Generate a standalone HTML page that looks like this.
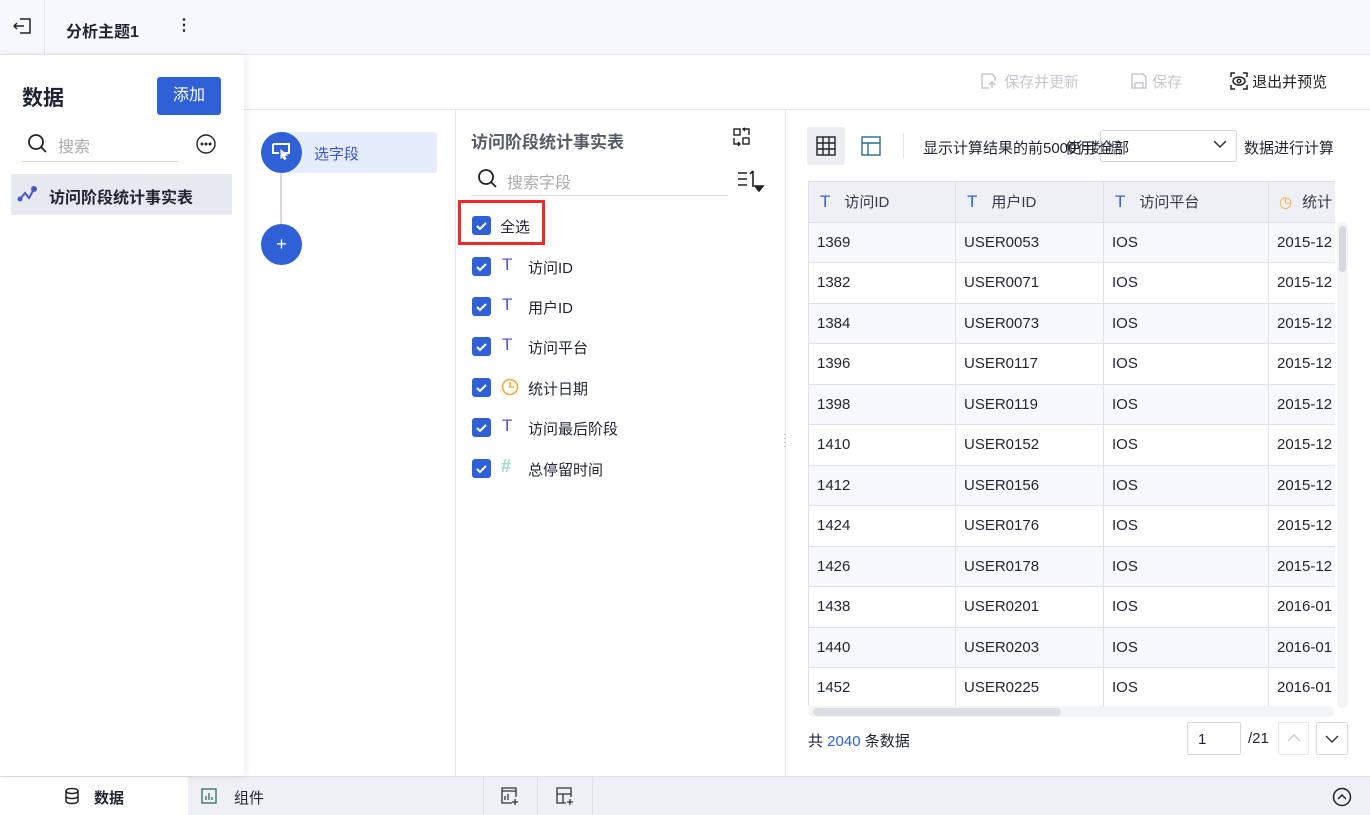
<!DOCTYPE html>
<html><head><meta charset="utf-8"><style>
*{box-sizing:border-box;margin:0;padding:0}
body{width:1370px;height:815px;overflow:hidden;background:#fff;font-family:"Liberation Sans","Noto Sans CJK SC",sans-serif;color:#1f2433;font-size:14px;position:relative}
.abs{position:absolute;white-space:nowrap}
.top{left:0;top:0;width:1370px;height:55px;background:#f7f8fc;border-bottom:1px solid #e3e6ec}
.left{left:0;top:55px;width:244px;height:721px;background:#fff;box-shadow:2px 0 8px rgba(0,0,0,.08);z-index:2}
.cb{width:19px;height:19px;background:#2f60d6;border-radius:3px}
.cb svg{display:block}
table{border-collapse:collapse;position:absolute;left:0;top:0;font-size:15px;table-layout:fixed;width:580px}
td,th{height:40.5px;border:1px solid #dde0e7;padding-left:8px;text-align:left;font-weight:normal;white-space:nowrap;overflow:hidden}
th{background:#eef0f5;color:#333a4a}
tr:nth-child(odd) td{background:#fff}
tr:nth-child(even) td{background:#f7f8fb}
.T{color:#2f60d6;font-size:17px;margin-right:14px;margin-left:3px}
</style></head><body>
<div class="abs top">
 <div class="abs" style="left:0;top:0;width:45px;height:54px;border-right:1px solid #e3e6ec"></div>
 <svg class="abs" style="left:13px;top:16px" width="20" height="20" viewBox="0 0 20 20" fill="none" stroke="#222" stroke-width="1.5"><path d="M7 3h10v14H7M1 10h10M4 7l-3 3 3 3"/></svg>
 <div class="abs" style="left:66px;top:18px;font-size:16px;font-weight:bold">分析主题1</div>
 <div class="abs" style="left:176px;top:15px;font-size:16px;font-weight:bold">⋮</div>
</div>
<div class="abs left">
 <div class="abs" style="left:22px;top:27px;font-size:21px;font-weight:bold">数据</div>
 <div class="abs" style="left:157px;top:22px;width:64px;height:38px;background:#2f60d6;border-radius:3px;color:#fff;font-size:16px;line-height:38px;text-align:center">添加</div>
 <svg class="abs" style="left:27px;top:78px" width="22" height="22" viewBox="0 0 22 22" fill="none" stroke="#222" stroke-width="1.8"><circle cx="9" cy="9" r="7"/><path d="M14 14l5 5"/></svg>
 <div class="abs" style="left:58px;top:78px;color:#aaa;font-size:16px">搜索</div>
 <div class="abs" style="left:22px;top:106px;width:156px;height:1px;background:#d8dbe2"></div>
 <svg class="abs" style="left:195px;top:78px" width="22" height="22" viewBox="0 0 22 22" fill="none" stroke="#222" stroke-width="1.4"><circle cx="11" cy="11" r="9"/><circle cx="7" cy="11" r=".8" fill="#222"/><circle cx="11" cy="11" r=".8" fill="#222"/><circle cx="15" cy="11" r=".8" fill="#222"/></svg>
 <div class="abs" style="left:11px;top:119px;width:221px;height:41px;background:#e6e9f0"></div>
 <svg class="abs" style="left:17px;top:130px" width="20" height="18" viewBox="0 0 20 18" fill="none" stroke="#4b55c9" stroke-width="2"><path d="M3 14l5-6 4 5 5-9"/><circle cx="3" cy="14" r="1.5" fill="#4b55c9"/><circle cx="17" cy="4" r="2" fill="#4b55c9"/></svg>
 <div class="abs" style="left:49px;top:129px;font-size:16px;font-weight:bold">访问阶段统计事实表</div>
</div>
<div class="abs" style="left:244px;top:109px;width:1126px;height:1px;background:#e3e6ec"></div>
<div class="abs" style="left:980px;top:71px;color:#c3c7cf;font-size:15px">
 <svg style="vertical-align:-3px" width="20" height="18" viewBox="0 0 20 18" fill="none" stroke="#c3c7cf" stroke-width="1.5"><path d="M9 16H2V2h10l3 3v4M12 16v-6m-3 3l3-3 3 3"/></svg> 保存并更新</div>
<div class="abs" style="left:1130px;top:71px;color:#c3c7cf;font-size:15px">
 <svg style="vertical-align:-3px" width="18" height="18" viewBox="0 0 18 18" fill="none" stroke="#c3c7cf" stroke-width="1.5"><path d="M2 2h11l3 3v11H2zM5 16v-5h8v5"/></svg> 保存</div>
<div class="abs" style="left:1230px;top:71px;font-size:15px;color:#222">
 <svg style="vertical-align:-3px" width="18" height="18" viewBox="0 0 18 18" fill="none" stroke="#222" stroke-width="1.5"><path d="M1 5V1h4M13 1h4v4M17 13v4h-4M5 17H1v-4"/><ellipse cx="9" cy="9" rx="6" ry="4"/><circle cx="9" cy="9" r="1.8"/></svg> 退出并预览</div>
<div class="abs" style="left:455px;top:110px;width:1px;height:666px;background:#e3e6ec"></div>
<div class="abs" style="left:785px;top:110px;width:1px;height:666px;background:#e3e6ec"></div>
<div class="abs" style="left:280px;top:172px;width:2px;height:56px;background:#d5d8de"></div>
<div class="abs" style="left:280px;top:132px;width:157px;height:41px;background:#e5edfc;border-radius:3px"></div>
<div class="abs" style="left:261px;top:132px;width:41px;height:41px;background:#2f60d6;border-radius:50%"></div>
<svg class="abs" style="left:271px;top:142px" width="22" height="20" viewBox="0 0 22 20" fill="none" stroke="#fff" stroke-width="2"><path d="M2 2h16v9h-6M8 11H2V2"/><path d="M10 8l6 5-3 .5 2 3-1.5 1-2-3L10 16z" fill="#fff" stroke-width="1"/></svg>
<div class="abs" style="left:314px;top:143px;color:#3a55c9;font-size:15px">选字段</div>
<div class="abs" style="left:261px;top:224px;width:41px;height:41px;background:#2f60d6;border-radius:50%;color:#fff;text-align:center;line-height:40px;font-size:18px">+</div>
<div class="abs" style="left:240px;top:405px;color:#999;font-size:10px;line-height:4px">·<br>·<br>·<br>·</div>
<div class="abs" style="left:783px;top:433px;color:#999;font-size:10px;line-height:4px">·<br>·<br>·<br>·</div>
<div class="abs" style="left:471px;top:128px;font-size:17px;font-weight:bold;color:#555c68">访问阶段统计事实表</div>
<svg class="abs" style="left:732px;top:127px" width="20" height="20" viewBox="0 0 20 20" fill="none" stroke="#222" stroke-width="1.4"><rect x="2" y="2" width="6" height="6"/><rect x="11" y="11" width="6" height="6"/><path d="M2 11v6h6M11 2h6v6M13 1l-2 1 2 2M6 19l2-2-2-2"/></svg>
<svg class="abs" style="left:477px;top:168px" width="22" height="22" viewBox="0 0 22 22" fill="none" stroke="#222" stroke-width="1.8"><circle cx="9" cy="9" r="7"/><path d="M14 14l5 5"/></svg>
<div class="abs" style="left:507px;top:169px;color:#aaa;font-size:16px">搜索字段</div>
<div class="abs" style="left:471px;top:195px;width:257px;height:1px;background:#d8dbe2"></div>
<svg class="abs" style="left:737px;top:170px" width="28" height="24" viewBox="0 0 28 24" fill="none" stroke="#222" stroke-width="1.6"><path d="M1 3h9M1 9h9M1 15h9M16 1v16M13 4l3-3"/><path d="M18 16h8l-4 5z" fill="#222"/></svg>
<div class="abs" style="left:458px;top:200px;width:87px;height:45px;border:3px solid #f02a2a"></div>
<div class="abs cb" style="left:472px;top:216px"><svg width="19" height="19"><path d="M5 10l3 3 6-6" stroke="#fff" stroke-width="2" fill="none"/></svg></div>
<div class="abs" style="left:500px;top:216px;font-size:15px">全选</div>
<div class="abs cb" style="left:472px;top:257px"><svg width="19" height="19"><path d="M5 10l3 3 6-6" stroke="#fff" stroke-width="2" fill="none"/></svg></div>
<div class="abs" style="left:502px;top:255px;color:#4b55c9;font-size:17px">T</div><div class="abs" style="left:528px;top:257px;font-size:15px">访问ID</div>
<div class="abs cb" style="left:472px;top:297px"><svg width="19" height="19"><path d="M5 10l3 3 6-6" stroke="#fff" stroke-width="2" fill="none"/></svg></div>
<div class="abs" style="left:502px;top:295px;color:#4b55c9;font-size:17px">T</div><div class="abs" style="left:528px;top:297px;font-size:15px">用户ID</div>
<div class="abs cb" style="left:472px;top:337px"><svg width="19" height="19"><path d="M5 10l3 3 6-6" stroke="#fff" stroke-width="2" fill="none"/></svg></div>
<div class="abs" style="left:502px;top:335px;color:#4b55c9;font-size:17px">T</div><div class="abs" style="left:528px;top:337px;font-size:15px">访问平台</div>
<div class="abs cb" style="left:472px;top:378px"><svg width="19" height="19"><path d="M5 10l3 3 6-6" stroke="#fff" stroke-width="2" fill="none"/></svg></div>
<svg class="abs" style="left:501px;top:378px" width="18" height="18" viewBox="0 0 18 18" fill="none" stroke="#f0a93c" stroke-width="1.6"><circle cx="9" cy="9" r="7.5"/><path d="M9 4v5h4"/></svg><div class="abs" style="left:528px;top:378px;font-size:15px">统计日期</div>
<div class="abs cb" style="left:472px;top:418px"><svg width="19" height="19"><path d="M5 10l3 3 6-6" stroke="#fff" stroke-width="2" fill="none"/></svg></div>
<div class="abs" style="left:502px;top:416px;color:#4b55c9;font-size:17px">T</div><div class="abs" style="left:528px;top:418px;font-size:15px">访问最后阶段</div>
<div class="abs cb" style="left:472px;top:459px"><svg width="19" height="19"><path d="M5 10l3 3 6-6" stroke="#fff" stroke-width="2" fill="none"/></svg></div>
<div class="abs" style="left:501px;top:456px;color:#9fd8cc;font-size:18px;font-weight:bold">#</div><div class="abs" style="left:528px;top:459px;font-size:15px">总停留时间</div>
<div class="abs" style="left:807px;top:127px;width:38px;height:38px;background:#eceef2;border-radius:3px"></div>
<svg class="abs" style="left:816px;top:136px" width="20" height="20" viewBox="0 0 20 20" fill="none" stroke="#222" stroke-width="1.4"><rect x="1" y="1" width="18" height="18"/><path d="M7 1v18M13 1v18M1 7h18M1 13h18"/></svg>
<svg class="abs" style="left:861px;top:136px" width="20" height="20" viewBox="0 0 20 20" fill="none" stroke="#2f6b8a" stroke-width="1.4"><rect x="1" y="1" width="18" height="18"/><path d="M1 7h18M7 7v12"/></svg>
<div class="abs" style="left:903px;top:133px;width:1px;height:26px;background:#e3e6ec"></div>
<div class="abs" style="left:923px;top:137px;font-size:15px">显示计算结果的前5000行数据</div>
<div class="abs" style="left:1100px;top:130px;width:137px;height:32px;border:1px solid #d5d8de;border-radius:3px;background:rgba(255,255,255,.3)"></div>
<div class="abs" style="left:1065px;top:137px;font-size:15px">使用 全部</div>
<svg class="abs" style="left:1212px;top:138px" width="16" height="12" viewBox="0 0 16 12" fill="none" stroke="#333" stroke-width="1.5"><path d="M2 3l6 6 6-6"/></svg>
<div class="abs" style="left:1244px;top:137px;font-size:15px">数据进行计算</div>
<div class="abs" style="left:808px;top:181px;width:527px;height:525px;overflow:hidden">
<table>
<colgroup><col style="width:147px"><col style="width:148px"><col style="width:165px"><col style="width:120px"></colgroup>
<tr><th><span class="T">T</span>访问ID</th><th><span class="T">T</span>用户ID</th><th><span class="T">T</span>访问平台</th><th><span style="color:#f0a93c;margin-right:10px;margin-left:2px">◷</span>统计</th></tr>
<tr><td>1369</td><td>USER0053</td><td>IOS</td><td>2015-12</td></tr>
<tr><td>1382</td><td>USER0071</td><td>IOS</td><td>2015-12</td></tr>
<tr><td>1384</td><td>USER0073</td><td>IOS</td><td>2015-12</td></tr>
<tr><td>1396</td><td>USER0117</td><td>IOS</td><td>2015-12</td></tr>
<tr><td>1398</td><td>USER0119</td><td>IOS</td><td>2015-12</td></tr>
<tr><td>1410</td><td>USER0152</td><td>IOS</td><td>2015-12</td></tr>
<tr><td>1412</td><td>USER0156</td><td>IOS</td><td>2015-12</td></tr>
<tr><td>1424</td><td>USER0176</td><td>IOS</td><td>2015-12</td></tr>
<tr><td>1426</td><td>USER0178</td><td>IOS</td><td>2015-12</td></tr>
<tr><td>1438</td><td>USER0201</td><td>IOS</td><td>2016-01</td></tr>
<tr><td>1440</td><td>USER0203</td><td>IOS</td><td>2016-01</td></tr>
<tr><td>1452</td><td>USER0225</td><td>IOS</td><td>2016-01</td></tr>
</table></div>
<div class="abs" style="left:1337px;top:222px;width:11px;height:486px;background:#f3f4f6;border-radius:5px"></div>
<div class="abs" style="left:1339px;top:226px;width:7px;height:46px;background:#d6d8dd;border-radius:4px"></div>
<div class="abs" style="left:808px;top:706px;width:526px;height:11px;background:#f3f4f6;border-radius:5px"></div>
<div class="abs" style="left:813px;top:708px;width:248px;height:8px;background:#dcdee2;border-radius:4px"></div>
<div class="abs" style="left:808px;top:730px;font-size:15px">共 <span style="color:#2f60d6">2040</span> 条数据</div>
<div class="abs" style="left:1187px;top:722px;width:54px;height:33px;border:1px solid #d5d8de;border-radius:2px;padding:8px 0 0 10px;font-size:15px">1</div>
<div class="abs" style="left:1248px;top:730px;font-size:15px">/21</div>
<div class="abs" style="left:1278px;top:722px;width:31px;height:33px;border:1px solid #e3e6ec;border-radius:2px"></div>
<svg class="abs" style="left:1286px;top:732px" width="16" height="12" viewBox="0 0 16 12" fill="none" stroke="#ccc" stroke-width="1.4"><path d="M2 9l6-6 6 6"/></svg>
<div class="abs" style="left:1316px;top:722px;width:32px;height:33px;border:1px solid #d5d8de;border-radius:2px"></div>
<svg class="abs" style="left:1324px;top:733px" width="16" height="12" viewBox="0 0 16 12" fill="none" stroke="#333" stroke-width="1.4"><path d="M2 3l6 6 6-6"/></svg>
<div class="abs" style="left:0;top:776px;width:1370px;height:39px;background:#eef0f5;border-top:1px solid #dde0e7"></div>
<div class="abs" style="left:0;top:777px;width:188px;height:38px;background:#fff"></div>
<svg class="abs" style="left:64px;top:787px" width="16" height="18" viewBox="0 0 16 18" fill="none" stroke="#222" stroke-width="1.5"><ellipse cx="8" cy="4" rx="6" ry="2.5"/><path d="M2 4v10c0 1.4 2.7 2.5 6 2.5s6-1.1 6-2.5V4M2 9c0 1.4 2.7 2.5 6 2.5S14 10.4 14 9"/></svg>
<div class="abs" style="left:94px;top:787px;font-size:15px;font-weight:bold">数据</div>
<svg class="abs" style="left:201px;top:788px" width="16" height="16" viewBox="0 0 16 16" fill="none" stroke="#2f6b5a" stroke-width="1.3"><rect x="1" y="1" width="14" height="14"/><path d="M5 12V8M8 12V5M11 12V9"/></svg>
<div class="abs" style="left:234px;top:787px;font-size:15px">组件</div>
<div class="abs" style="left:483px;top:777px;width:1px;height:38px;background:#dde0e7"></div>
<div class="abs" style="left:537px;top:777px;width:1px;height:38px;background:#dde0e7"></div>
<div class="abs" style="left:592px;top:777px;width:1px;height:38px;background:#dde0e7"></div>
<svg class="abs" style="left:500px;top:786px" width="20" height="20" viewBox="0 0 20 20" fill="none" stroke="#333" stroke-width="1.3"><path d="M12 17H2V2h14v9M2 5h14M5 14v-4M8 14V8M15 13v6M12 16h6"/></svg>
<svg class="abs" style="left:555px;top:786px" width="20" height="20" viewBox="0 0 20 20" fill="none" stroke="#333" stroke-width="1.3"><path d="M11 17H2V2h14v9M2 8h14M8 8v9M15 13v6M12 16h6"/></svg>
<svg class="abs" style="left:1332px;top:787px" width="20" height="20" viewBox="0 0 20 20" fill="none" stroke="#222" stroke-width="1.5"><circle cx="10" cy="10" r="8.5"/><path d="M6 12l4-4 4 4"/></svg>
</body></html>
